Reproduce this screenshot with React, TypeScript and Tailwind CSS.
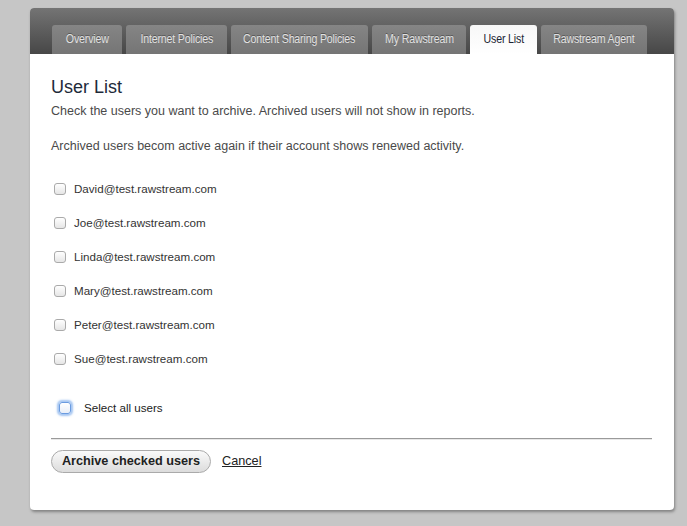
import React, { useState } from "react";

const tabs = [
  { label: "Overview", w: "w-[70px]" },
  { label: "Internet Policies", w: "w-[101px]" },
  { label: "Content Sharing Policies", w: "w-[137px]" },
  { label: "My Rawstream", w: "w-[94px]" },
  { label: "User List", w: "w-[67px]", active: true },
  { label: "Rawstream Agent", w: "w-[106px]" },
];

const users = [
  "David@test.rawstream.com",
  "Joe@test.rawstream.com",
  "Linda@test.rawstream.com",
  "Mary@test.rawstream.com",
  "Peter@test.rawstream.com",
  "Sue@test.rawstream.com",
];

export default function App() {
  const [checked, setChecked] = useState<Record<string, boolean>>({});

  return (
    <div className="min-h-[526px] w-full bg-[#c6c6c6] pt-[8px] pl-[30px] font-['Liberation_Sans',sans-serif]">
      <div className="w-[644px] h-[502px] rounded-[4px] bg-white shadow-[1px_2px_3px_rgba(0,0,0,0.35)] overflow-hidden flex flex-col">
        {/* tab strip */}
        <div className="h-[46px] bg-gradient-to-b from-[#747474] to-[#474747] flex items-end gap-[4px] pl-[22px]">
          {tabs.map((t) => (
            <div
              key={t.label}
              className={
                t.active
                  ? `${t.w} h-[29px] rounded-t-[3px] bg-gradient-to-b from-[#f7f7f7] to-white flex items-center justify-center text-[#1b2533]`
                  : `${t.w} h-[29px] rounded-t-[3px] bg-gradient-to-b from-[#858585] to-[#757575] flex items-center justify-center text-[#e2e2e2] [text-shadow:0_-1px_0_rgba(0,0,0,0.35)]`
              }
            >
              <span className="whitespace-nowrap text-[12.5px] scale-x-[0.85] tracking-[-0.2px]">{t.label}</span>
            </div>
          ))}
        </div>

        {/* content */}
        <div className="pl-[21px] pr-[22px] pt-[21px]">
          <h1 className="text-[18px] leading-[24px] text-[#1e2a3a] font-light">User List</h1>
          <p className="mt-[4px] text-[12.5px] leading-[16px] text-[#4a4a4a]">
            Check the users you want to archive. Archived users will not show in reports.
          </p>
          <p className="mt-[19px] text-[12.5px] leading-[16px] text-[#4a4a4a]">
            Archived users becom active again if their account shows renewed activity.
          </p>

          <div className="mt-[28px] flex flex-col gap-[20px] pl-[3px]">
            {users.map((u) => (
              <label key={u} className="flex items-center h-[14px] gap-[8px] text-[11.6px] text-[#333]">
                <input
                  type="checkbox"
                  checked={!!checked[u]}
                  onChange={(e) => setChecked({ ...checked, [u]: e.target.checked })}
                  className="appearance-none w-[12px] h-[12px] rounded-[3px] border border-[#aaa] bg-gradient-to-b from-white to-[#e6e6e6] checked:bg-[#4a90d9]"
                />
                {u}
              </label>
            ))}
          </div>

          <label className="mt-[35px] ml-[8px] flex items-center h-[14px] gap-[13px] text-[11.6px] text-[#222]">
            <span className="w-[12px] h-[12px] rounded-[3px] border border-[#6a9be0] bg-gradient-to-b from-white to-[#e8eef8] shadow-[0_0_2px_2px_rgba(90,150,230,0.55)]" />
            Select all users
          </label>

          <div className="mt-[23px] h-[2px] border-t border-[#9a9a9a] border-b-[#e8e8e8] border-b" />

          <div className="mt-[10px] flex items-center gap-[11px]">
            <button className="w-[160px] h-[23px] rounded-full border border-[#aaa] bg-gradient-to-b from-[#fafafa] to-[#dcdcdc] text-[12.7px] font-bold text-[#222]">
              Archive checked users
            </button>
            <a href="#" className="text-[12.7px] text-[#222] underline">
              Cancel
            </a>
          </div>
        </div>
      </div>
    </div>
  );
}
